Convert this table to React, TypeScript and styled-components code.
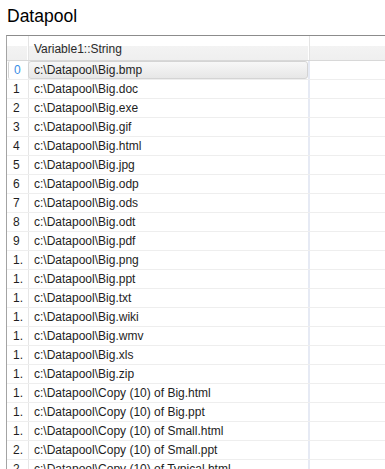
import React from "react";
import styled, { createGlobalStyle } from "styled-components";

const Global = createGlobalStyle`
  html, body { margin: 0; padding: 0; background: #fff; overflow: hidden; }
  body { font-family: "Liberation Sans", Arial, sans-serif; }
`;

const Page = styled.div`
  width: 385px;
  height: 469px;
  overflow: hidden;
  display: flex;
  flex-direction: column;
`;

const Title = styled.h1`
  margin: 0;
  padding: 6px 0 9px 7px;
  font-size: 17.5px;
  line-height: 20px;
  font-weight: normal;
  color: #000;
`;

const Table = styled.div`
  margin-left: 6px;
  border-left: 1px solid #a4a4a4;
  border-top: 1px solid #8c8c8c;
  flex: 1;
  display: flex;
  flex-direction: column;
`;

const HeaderRow = styled.div`
  display: grid;
  grid-template-columns: 22px 281px 1fr;
  height: 24px;
  border-bottom: 1px solid #d8d8d8;
  background: linear-gradient(to bottom, #ffffff 0, #ffffff 42%, #f3f3f3 42%, #efefef 100%);
`;

const HeaderCell = styled.div<{ $sep?: boolean }>`
  box-sizing: border-box;
  padding: 6px 0 0 5px;
  font-size: 12px;
  line-height: 14px;
  color: #2a2a2a;
  white-space: nowrap;
  border-right: ${(p) => (p.$sep ? "1px solid #e4e4e4" : "none")};
  box-shadow: ${(p) => (p.$sep ? "inset -1px 0 #ffffff" : "none")};
`;

const Row = styled.div`
  display: grid;
  grid-template-columns: 22px 281px 1fr;
  height: 18px;
  border-bottom: 1px solid #eeeeee;
`;

const IndexCell = styled.div<{ $selected?: boolean }>`
  box-sizing: border-box;
  display: flex;
  align-items: center;
  padding-left: ${(p) => (p.$selected ? "5px" : "6px")};
  margin-left: ${(p) => (p.$selected ? "1px" : "0")};
  border-right: 1px solid #e6e6e6;
  border-left: ${(p) => (p.$selected ? "1px solid #d2d2d2" : "none")};
  border-radius: ${(p) => (p.$selected ? "2px 0 0 2px" : "0")};
  font-size: 12px;
  line-height: 14px;
  color: ${(p) => (p.$selected ? "#3a8ee6" : "#1e1e1e")};
`;

const DataCell = styled.div`
  box-sizing: border-box;
  display: flex;
  border-right: 2px solid #e6eaf4;
  min-width: 0;
`;

const DataText = styled.div<{ $selected?: boolean }>`
  flex: 1;
  display: flex;
  align-items: center;
  font-size: 12px;
  line-height: 14px;
  color: #1e1e1e;
  white-space: nowrap;
  overflow: hidden;
  border: 1px solid ${(p) => (p.$selected ? "#d4d4d4" : "transparent")};
  border-radius: 3px;
  margin: 0 0 0 -1px;
  padding-left: 5px;
  background: ${(p) =>
    p.$selected ? "linear-gradient(to bottom, #f7f7f7, #e7e7e7)" : "transparent"};
`;

const Filler = styled.div``;

const files = [
  "Big.bmp",
  "Big.doc",
  "Big.exe",
  "Big.gif",
  "Big.html",
  "Big.jpg",
  "Big.odp",
  "Big.ods",
  "Big.odt",
  "Big.pdf",
  "Big.png",
  "Big.ppt",
  "Big.txt",
  "Big.wiki",
  "Big.wmv",
  "Big.xls",
  "Big.zip",
  "Copy (10) of Big.html",
  "Copy (10) of Big.ppt",
  "Copy (10) of Small.html",
  "Copy (10) of Small.ppt",
  "Copy (10) of Typical.html",
];

const indexLabel = (i: number) => (i < 10 ? String(i) : String(i)[0] + ".");

export default function App() {
  return (
    <Page>
      <Global />
      <Title>Datapool</Title>
      <Table>
        <HeaderRow>
          <HeaderCell $sep />
          <HeaderCell $sep>Variable1::String</HeaderCell>
          <HeaderCell />
        </HeaderRow>
        {files.map((f, i) => (
          <Row key={f}>
            <IndexCell $selected={i === 0}>{indexLabel(i)}</IndexCell>
            <DataCell>
              <DataText $selected={i === 0}>c:\Datapool\{f}</DataText>
            </DataCell>
            <Filler />
          </Row>
        ))}
      </Table>
    </Page>
  );
}
